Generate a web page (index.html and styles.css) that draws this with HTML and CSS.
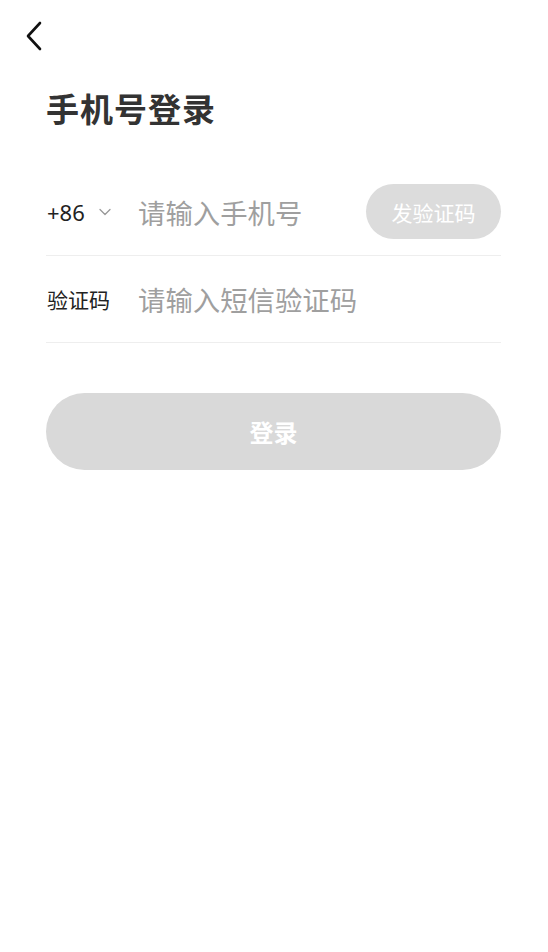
FILE: index.html
```html
<!DOCTYPE html>
<html lang="zh-CN">
<head>
  <meta charset="UTF-8" />
  <meta name="viewport" content="width=device-width, initial-scale=1.0"/>
  <title>手机号登录</title>
  <link rel="stylesheet" href="styles.css">
</head>
<body>
  <div class="topbar">
    <button class="back" aria-label="返回">
      <svg width="18" height="30" viewBox="0 0 18 30">
        <polyline points="15,2 3,15 15,28" fill="none" stroke="#111" stroke-width="2.6" stroke-linecap="round" stroke-linejoin="round"/>
      </svg>
    </button>
  </div>

  <h1 class="title">手机号登录</h1>

  <div class="form">
    <div class="row">
      <div class="prefix">
        <span>+86</span>
        <svg width="14" height="10" viewBox="0 0 14 10">
          <polyline points="2,2.5 7,7.5 12,2.5" fill="none" stroke="#999" stroke-width="1.3" stroke-linecap="round" stroke-linejoin="round"/>
        </svg>
      </div>
      <input class="field" type="tel" placeholder="请输入手机号">
      <button class="send" disabled>发验证码</button>
    </div>
    <div class="row">
      <div class="label">验证码</div>
      <input class="field" type="text" placeholder="请输入短信验证码">
    </div>
  </div>

  <button class="login" disabled>登录</button>
</body>
</html>
```

FILE: styles.css
```css
body {
  margin: 0;
  font-family: "Noto Sans CJK SC", "Noto Sans", sans-serif;
  background: #fff;
  color: #333;
}

.topbar {
  height: 70px;
  padding-left: 22px;
  display: flex;
  align-items: center;
}

.back {
  border: none;
  background: none;
  padding: 0;
  margin-top: 2px;
  width: 24px;
  height: 34px;
  display: flex;
  align-items: center;
  justify-content: center;
}

.title {
  margin: 8px 0 0 46px;
  font-size: 33px;
  font-weight: 700;
  color: #333;
  line-height: 60px;
  letter-spacing: 1px;
}

.form {
  margin: 31px 47px 0 46px;
}

.row {
  height: 86px;
  border-bottom: 1px solid #eee;
  display: flex;
  align-items: center;
}

.prefix {
  width: 91px;
  display: flex;
  align-items: center;
  gap: 13px;
  font-family: "Noto Sans", sans-serif;
  font-size: 22px;
  color: #222;
  padding-left: 1px;
}

.label {
  width: 91px;
  font-size: 21px;
  color: #222;
  padding-left: 1px;
}

.field {
  flex: 1;
  min-width: 0;
  border: none;
  outline: none;
  background: none;
  padding: 0;
  font-family: inherit;
  font-size: 27.4px;
  color: #333;
}

.field::placeholder {
  color: #9f9f9f;
}

.send {
  width: 135px;
  height: 55px;
  border: none;
  border-radius: 28px;
  background: #dcdcdc;
  color: #fff;
  font-family: inherit;
  font-size: 21px;
  margin-top: -1px;
}

.login {
  display: block;
  margin: 50px 47px 0 46px;
  width: calc(100% - 93px);
  height: 77px;
  border: none;
  border-radius: 39px;
  background: #d9d9d9;
  color: #fff;
  font-family: inherit;
  font-size: 24px;
  font-weight: 700;
}
```
